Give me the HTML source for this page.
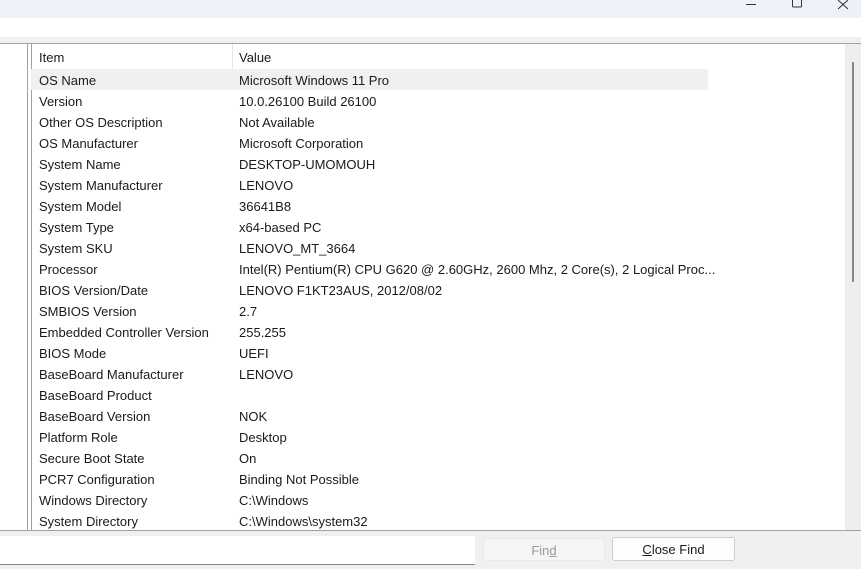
<!DOCTYPE html><html><head><style>
body{margin:0;width:861px;height:568px;overflow:hidden;background:#fff;font-family:"Segoe UI","Liberation Sans",sans-serif;font-size:13px;color:#1a1a1a;position:relative}
.a{position:absolute}
.r{position:absolute;left:31px;height:21px;line-height:23px;width:677px}
.r span{position:absolute;left:8px}.r b{font-weight:normal;position:absolute;left:208px;white-space:nowrap}
</style></head><body>
<div class="a" style="left:0;top:0;width:861px;height:18px;background:#eef1f9"></div>
<svg class="a" style="left:740px;top:0" width="121" height="10"><line x1="6" y1="4.5" x2="16" y2="4.5" stroke="#333"/><rect x="52.5" y="-2" width="9" height="9" rx="1" fill="none" stroke="#333"/><path d="M98 0l10 9M108 0l-10 9" stroke="#333"/></svg>
<div class="a" style="left:0;top:37px;width:861px;height:6px;background:#f0f0f0;border-bottom:1px solid #a0a0a0"></div>
<div class="a" style="left:0;top:44px;width:27px;height:486px;border-right:1px solid #a0a0a0"></div>
<div class="a" style="left:31px;top:44px;width:1px;height:486px;background:#a0a0a0"></div>
<div class="a" style="left:845px;top:44px;width:16px;height:486px;background:#eee"></div>
<div class="a" style="left:852px;top:62px;width:2px;height:220px;background:#888"></div>
<div class="a" style="left:232px;top:44px;width:1px;height:24px;background:#e5e5e5"></div>
<div class="r" style="top:46px"><span>Item</span><b>Value</b></div>
<div class="r" style="top:69px;background:#f0f0f0"><span>OS Name</span><b>Microsoft Windows 11 Pro</b></div>
<div class="r" style="top:90px"><span>Version</span><b>10.0.26100 Build 26100</b></div>
<div class="r" style="top:111px"><span>Other OS Description</span><b>Not Available</b></div>
<div class="r" style="top:132px"><span>OS Manufacturer</span><b>Microsoft Corporation</b></div>
<div class="r" style="top:153px"><span>System Name</span><b>DESKTOP-UMOMOUH</b></div>
<div class="r" style="top:174px"><span>System Manufacturer</span><b>LENOVO</b></div>
<div class="r" style="top:195px"><span>System Model</span><b>36641B8</b></div>
<div class="r" style="top:216px"><span>System Type</span><b>x64-based PC</b></div>
<div class="r" style="top:237px"><span>System SKU</span><b>LENOVO_MT_3664</b></div>
<div class="r" style="top:258px"><span>Processor</span><b>Intel(R) Pentium(R) CPU G620 @ 2.60GHz, 2600 Mhz, 2 Core(s), 2 Logical Proc...</b></div>
<div class="r" style="top:279px"><span>BIOS Version/Date</span><b>LENOVO F1KT23AUS, 2012/08/02</b></div>
<div class="r" style="top:300px"><span>SMBIOS Version</span><b>2.7</b></div>
<div class="r" style="top:321px"><span>Embedded Controller Version</span><b>255.255</b></div>
<div class="r" style="top:342px"><span>BIOS Mode</span><b>UEFI</b></div>
<div class="r" style="top:363px"><span>BaseBoard Manufacturer</span><b>LENOVO</b></div>
<div class="r" style="top:384px"><span>BaseBoard Product</span><b></b></div>
<div class="r" style="top:405px"><span>BaseBoard Version</span><b>NOK</b></div>
<div class="r" style="top:426px"><span>Platform Role</span><b>Desktop</b></div>
<div class="r" style="top:447px"><span>Secure Boot State</span><b>On</b></div>
<div class="r" style="top:468px"><span>PCR7 Configuration</span><b>Binding Not Possible</b></div>
<div class="r" style="top:489px"><span>Windows Directory</span><b>C:\Windows</b></div>
<div class="r" style="top:510px"><span>System Directory</span><b>C:\Windows\system32</b></div>
<div class="a" style="left:0;top:530px;width:861px;height:38px;background:#f0f0f0;border-top:1px solid #a0a0a0"></div>
<div class="a" style="left:0;top:536px;width:475px;height:28px;background:#fff;border-bottom:1px solid #888"></div>
<div class="a" style="left:483px;top:538px;width:120px;height:21px;background:#f5f5f5;border:1px solid #e8e8e8;border-radius:3px;text-align:center;line-height:23px;color:#999">Fin<u>d</u></div>
<div class="a" style="left:612px;top:537px;width:121px;height:22px;background:#fdfdfd;border:1px solid #ccc;border-radius:3px;text-align:center;line-height:24px"><u>C</u>lose Find</div>
</body></html>
